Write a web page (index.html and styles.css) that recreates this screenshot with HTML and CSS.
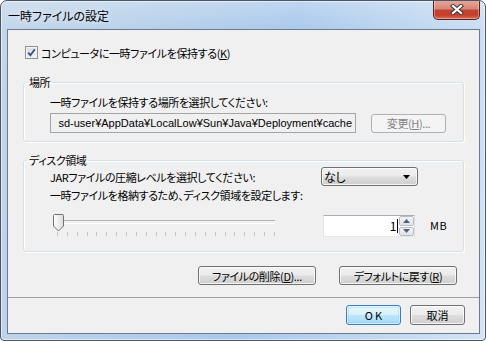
FILE: index.html
```html
<!DOCTYPE html>
<html lang="ja">
<head>
<meta charset="utf-8">
<title>一時ファイルの設定</title>
<link rel="stylesheet" href="styles.css">
</head>
<body>
<div class="window">
  <div class="titlebar">
    <span class="title">一時ファイルの設定</span>
    <div class="close">
      <svg width="14" height="11" viewBox="0 0 14 11">
        <path d="M3 2 L11 9 M11 2 L3 9" stroke="#3a3a3a" stroke-width="4.2" stroke-linecap="square" fill="none"/>
        <path d="M3 2 L11 9 M11 2 L3 9" stroke="#ffffff" stroke-width="2.2" stroke-linecap="square" fill="none"/>
      </svg>
    </div>
  </div>
  <div class="client">
    <div class="check-row">
      <span class="checkbox">
        <svg width="9" height="9" viewBox="0 0 9 9"><path d="M1.2 4.6 L3.4 7.2 L7.8 1.2" stroke="#3b4f90" stroke-width="1.8" fill="none"/></svg>
      </span>
      <span class="text">コンピュータに一時ファイルを保持する(<u>K</u>)</span>
    </div>

    <fieldset class="group group-loc">
      <legend>場所</legend>
      <div class="label">一時ファイルを保持する場所を選択してください:</div>
      <div class="path-row">
        <div class="path"><span>sd-user¥AppData¥LocalLow¥Sun¥Java¥Deployment¥cache</span></div>
        <div class="btn btn-disabled btn-change">変更(<u>H</u>)...</div>
      </div>
    </fieldset>

    <fieldset class="group group-disk">
      <legend>ディスク領域</legend>
      <div class="jar-row">
        <span class="jar-label">JARファイルの圧縮レベルを選択してください:</span>
        <div class="combo">
          <span>なし</span>
          <svg width="7" height="4" viewBox="0 0 7 4"><path d="M0 0 H7 L3.5 4 Z" fill="#000"/></svg>
        </div>
      </div>
      <div class="label label-disk">一時ファイルを格納するため、ディスク領域を設定します:</div>
      <div class="size-row">
        <div class="slider">
          <div class="track-line">
            <svg class="thumb" width="11" height="18" viewBox="0 0 11 18">
              <defs>
                <linearGradient id="tg" x1="0" y1="0" x2="1" y2="0">
                  <stop offset="0" stop-color="#ffffff"/>
                  <stop offset="1" stop-color="#dcdcdc"/>
                </linearGradient>
              </defs>
              <path d="M1.5 0.5 H9.5 Q10.5 0.5 10.5 1.5 V12 L5.5 17 L0.5 12 V1.5 Q0.5 0.5 1.5 0.5 Z" fill="url(#tg)" stroke="#707070"/>
            </svg>
          </div>
          <div class="ticks">
            <i></i><i></i><i></i><i></i><i></i><i></i><i></i><i></i><i></i><i></i><i></i><i></i>
            <i></i><i></i><i></i><i></i><i></i><i></i><i></i><i></i><i></i><i></i><i></i>
          </div>
        </div>
        <div class="spin">
          <div class="spin-value"><span>1</span><b class="caret"></b></div>
          <div class="spin-buttons">
            <div class="spin-btn"><svg width="7" height="4" viewBox="0 0 7 4"><path d="M0 4 H7 L3.5 0 Z" fill="#4d6185"/></svg></div>
            <div class="spin-btn"><svg width="7" height="4" viewBox="0 0 7 4"><path d="M0 0 H7 L3.5 4 Z" fill="#4d6185"/></svg></div>
          </div>
        </div>
        <span class="unit">MB</span>
      </div>
    </fieldset>

    <div class="actions">
      <div class="btn btn-wide">ファイルの削除(<u>D</u>)...</div>
      <div class="btn btn-wide">デフォルトに戻す(<u>R</u>)</div>
    </div>

    <div class="separator"></div>

    <div class="footer">
      <div class="btn btn-small btn-default btn-ok">OK</div>
      <div class="btn btn-small">取消</div>
    </div>
  </div>
</div>
</body>
</html>
```

FILE: styles.css
```css
* { box-sizing: border-box; }

html, body {
  margin: 0;
  padding: 0;
  background: #ffffff;
}

body {
  font-family: "Noto Sans CJK JP", "Noto Sans", sans-serif;
  font-size: 11px;
  line-height: 14px;
  letter-spacing: -0.4px;
  color: #000;
  font-feature-settings: "palt";
}

u { text-decoration: underline; text-underline-offset: 1px; }

.window {
  width: 486px;
  height: 341px;
  border: 1px solid #4b5665;
  border-radius: 7px 7px 4px 4px;
  background:
    linear-gradient(180deg, rgba(255,255,255,0.25) 0%, rgba(255,255,255,0) 30px),
    linear-gradient(100deg, #c3d6ea 0%, #b5cfea 30%, #a9c9ec 55%, #bcd5f0 75%, #d4e4f5 100%);
  box-shadow: inset 0 0 0 1px rgba(255,255,255,0.55);
  padding: 0 5px 6px 6px;
  display: flex;
  flex-direction: column;
  overflow: hidden;
}

.titlebar {
  height: 28px;
  display: flex;
  justify-content: space-between;
  align-items: flex-start;
  flex: none;
}

.title {
  margin-top: 8px;
  margin-left: 1px;
  font-size: 12px;
  line-height: 14px;
  letter-spacing: 0;
  color: #000;
  text-shadow: 0 0 6px rgba(255,255,255,0.9);
}

.close {
  width: 47px;
  height: 20px;
  margin-top: -1px;
  border: 1px solid #5a1f18;
  border-top: none;
  border-radius: 0 0 5px 5px;
  background: linear-gradient(180deg, #e8a99c 0%, #d88878 45%, #c2432f 55%, #c6402b 80%, #d8715c 100%);
  box-shadow: inset 0 0 0 1px rgba(255,255,255,0.35);
  display: flex;
  align-items: center;
  justify-content: center;
}

.client {
  flex: 1;
  border: 1px solid #6b7a8c;
  background: #f0f0f0;
  display: flex;
  flex-direction: column;
}

.check-row {
  margin: 16px 0 0 17px;
  height: 13px;
  display: flex;
  align-items: center;
}

.checkbox {
  width: 13px;
  height: 13px;
  border: 1px solid #8e8f8f;
  background: linear-gradient(135deg, #dcdcdc 0%, #f5f5f5 100%);
  box-shadow: inset 0 0 0 1px #f4f4f4;
  display: flex;
  align-items: center;
  justify-content: center;
  flex: none;
}

.check-row .text {
  margin-left: 3px;
  line-height: 14px;
}

.group {
  margin: 0 15px;
  border: 1px solid #d5dfe5;
  border-radius: 3px;
  box-shadow: inset 1px 1px 0 #fff, 1px 1px 0 #fff;
  padding: 0 0 0 26px;
  min-width: 0;
}

.group legend {
  margin-left: -23px;
  padding: 0 2px 0 2px;
  line-height: 12px;
  height: 12px;
}

.group-loc {
  margin-top: 17px;
  padding-bottom: 8px;
}

.group-disk {
  margin-top: 12px;
  padding-bottom: 15px;
}

.label {
  margin-top: 7px;
  line-height: 14px;
}

.path-row {
  margin-top: 4px;
  display: flex;
  align-items: center;
  gap: 15px;
}

.path {
  width: 306px;
  height: 20px;
  border: 1px solid #a5a5a5;
  background: #f0f0f0;
  display: flex;
  justify-content: flex-end;
  align-items: center;
  overflow: hidden;
  padding: 0 3px 0 2px;
  white-space: nowrap;
  font-family: "Liberation Sans", "Noto Sans CJK JP", sans-serif;
  font-size: 11px;
  letter-spacing: 0;
}

.path span { flex: none; }

.btn {
  height: 19px;
  border: 1px solid #707070;
  border-radius: 3px;
  background: linear-gradient(180deg, #f2f2f2 0%, #ebebeb 48%, #dddddd 52%, #cfcfcf 100%);
  box-shadow: inset 0 0 0 1px rgba(255,255,255,0.75);
  display: flex;
  align-items: center;
  justify-content: center;
  line-height: 14px;
  white-space: nowrap;
  flex: none;
}

.btn-disabled {
  border-color: #adb2b5;
  background: #f4f4f4;
  color: #838383;
  box-shadow: none;
}

.btn-change { width: 75px; }

.jar-row {
  margin-top: 1px;
  height: 19px;
  display: flex;
  align-items: center;
}

.jar-label { width: 271px; flex: none; }

.combo {
  width: 97px;
  height: 19px;
  border: 1px solid #707070;
  border-radius: 3px;
  background: linear-gradient(180deg, #f2f2f2 0%, #ebebeb 48%, #dddddd 52%, #cfcfcf 100%);
  box-shadow: inset 0 0 0 1px rgba(255,255,255,0.75);
  display: flex;
  align-items: center;
  justify-content: space-between;
  padding: 0 7px 0 2px;
  font-size: 12px;
}

.label-disk { margin-top: 2px; }

.size-row {
  margin-top: 12px;
  height: 22px;
  display: flex;
  align-items: flex-start;
}

.slider {
  width: 224px;
  flex: none;
  margin-left: 1px;
  display: flex;
  flex-direction: column;
}

.track-line {
  height: 17px;
  display: flex;
  align-items: flex-start;
  position: relative;
}

.track-line::after {
  content: "";
  flex: 1;
  margin-top: 6px;
  height: 2px;
  border-top: 1px solid #b3b3b3;
  border-bottom: 1px solid #ffffff;
  margin-left: -1px;
}

.thumb {
  flex: none;
  margin-left: 2px;
  position: relative;
  z-index: 1;
}

.ticks {
  margin: 1px 0 0 6px;
  display: flex;
  justify-content: space-between;
  height: 4px;
}

.ticks i {
  width: 1px;
  height: 4px;
  background: #c4c4c4;
}

.spin {
  margin-left: 48px;
  width: 92px;
  height: 22px;
  border: 1px solid #abadb3;
  border-left-color: #e2e3ea;
  border-right-color: #dbdfe6;
  border-bottom-color: #e3e9ef;
  background: #fff;
  display: flex;
  margin-top: 1px;
}

.spin-value {
  flex: 1;
  display: flex;
  justify-content: flex-end;
  align-items: center;
  padding-right: 1px;
  font-size: 12px;
}

.caret {
  width: 1px;
  height: 14px;
  background: #000;
  margin-left: 1px;
}

.spin-buttons {
  width: 15px;
  display: flex;
  flex-direction: column;
  gap: 1px;
}

.spin-btn {
  flex: 1;
  border: 1px solid #b5bccb;
  border-radius: 2px;
  background: linear-gradient(180deg, #f3f3f3 0%, #e4e4e4 100%);
  display: flex;
  align-items: center;
  justify-content: center;
}

.unit {
  margin-left: 15px;
  margin-top: 4px;
  line-height: 14px;
  letter-spacing: 0.5px;
}

.actions {
  margin: 14px 22px 0 0;
  display: flex;
  justify-content: flex-end;
  gap: 23px;
}

.btn-wide { width: 118px; }

.separator {
  margin-top: 12px;
  height: 1px;
  background: #a0a0a0;
}

.footer {
  margin: 7px 14px 0 0;
  display: flex;
  justify-content: flex-end;
  gap: 9px;
}

.btn-small {
  width: 55px;
  height: 20px;
  letter-spacing: 0;
}

.btn-ok { letter-spacing: 2px; padding-left: 2px; }

.btn-default {
  border-color: #3c7fb1;
  background: linear-gradient(180deg, #eaf6fd 0%, #d9f0fc 48%, #bee6fd 52%, #a7d9f5 100%);
  box-shadow: inset 0 0 0 1px rgba(255,255,255,0.6), inset 0 0 0 2px rgba(72,201,255,0.25);
}
```
